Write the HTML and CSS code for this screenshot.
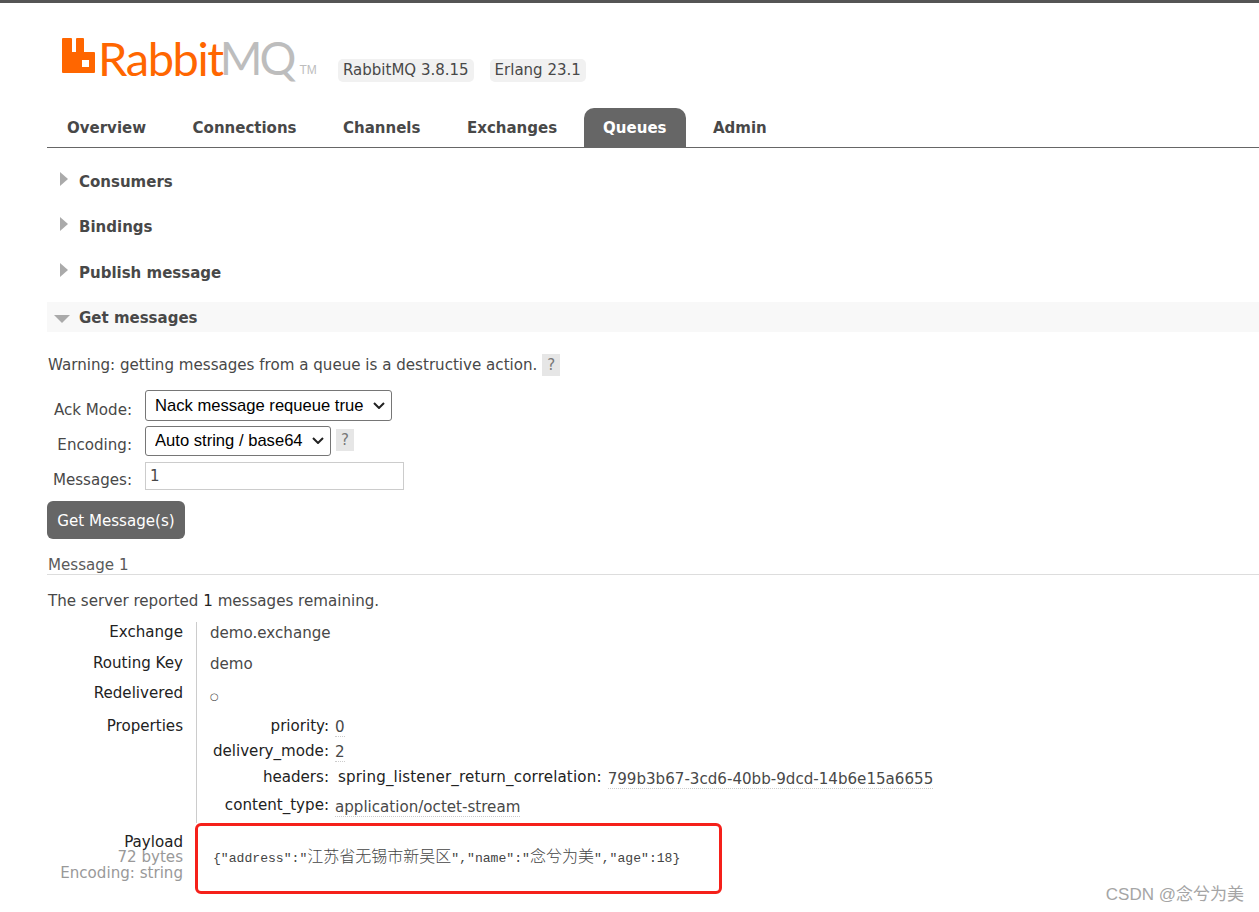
FILE: index.html
```html
<!DOCTYPE html>
<html lang="en">
<head>
<meta charset="utf-8">
<title>RabbitMQ Management</title>
<link rel="stylesheet" href="styles.css">
</head>
<body>
<header class="header">
  <div class="logo">
    <svg class="logo-mark" width="33" height="35" viewBox="0 0 33 35"><path fill="#ff6600" fill-rule="evenodd" d="M0 1a1 1 0 0 1 1-1h8a1 1 0 0 1 1 1v13h4V1a1 1 0 0 1 1-1h6a1 1 0 0 1 1 1v13h10a1 1 0 0 1 1 1v19a1 1 0 0 1-1 1H1a1 1 0 0 1-1-1zM20 22v7h7v-7z"/></svg>
    <span class="word-rabbit">Rabbit</span><span class="word-mq">MQ</span><span class="word-tm">TM</span>
  </div>
  <span class="badge badge-first">RabbitMQ 3.8.15</span>
  <span class="badge">Erlang 23.1</span>
</header>
<nav class="tabs">
  <a class="tab">Overview</a>
  <a class="tab">Connections</a>
  <a class="tab">Channels</a>
  <a class="tab">Exchanges</a>
  <a class="tab tab-active">Queues</a>
  <a class="tab">Admin</a>
</nav>
<main class="main">
  <h2 class="section"><span class="tri-right"></span>Consumers</h2>
  <h2 class="section"><span class="tri-right"></span>Bindings</h2>
  <h2 class="section section-low"><span class="tri-right"></span>Publish message</h2>
  <h2 class="section section-low section-open"><span class="tri-down"></span>Get messages</h2>
  <p class="warning">Warning: getting messages from a queue is a destructive action.<span class="help help-warning">?</span></p>
  <form class="form">
    <div class="form-row row-ack"><label class="form-label">Ack Mode:</label>
      <select class="select select-ack"><option>Nack message requeue true</option></select></div>
    <div class="form-row row-enc"><label class="form-label">Encoding:</label>
      <select class="select select-enc"><option>Auto string / base64</option></select><span class="help">?</span></div>
    <div class="form-row row-msg"><label class="form-label">Messages:</label>
      <input class="input" type="text" value="1"></div>
    <button class="button" type="button">Get Message(s)</button>
  </form>
  <h3 class="msg-title">Message 1</h3>
  <p class="server">The server reported <b class="count">1</b> messages remaining.</p>
  <div class="details">
    <div class="d-label l-exchange">Exchange</div><div class="d-value v-exchange">demo.exchange</div>
    <div class="d-label l-routing">Routing Key</div><div class="d-value v-routing">demo</div>
    <div class="d-label l-redel">Redelivered</div><div class="d-value v-redel">○</div>
    <div class="d-label l-props">Properties</div>
    <div class="d-value props">
      <div class="p-label">priority:</div><div class="p-value"><span class="dotted">0</span></div>
      <div class="p-label">delivery_mode:</div><div class="p-value"><span class="dotted">2</span></div>
      <div class="p-label">headers:</div><div class="p-value p-low"><span class="p-key">spring_listener_return_correlation:</span><span class="dotted">799b3b67-3cd6-40bb-9dcd-14b6e15a6655</span></div>
      <div class="p-label">content_type:</div><div class="p-value p-low"><span class="dotted">application/octet-stream</span></div>
    </div>
  </div>
  <div class="payload">
    <div class="pay-label"><div class="pay-title">Payload</div><div class="pay-sub">72 bytes</div><div class="pay-sub">Encoding: string</div></div>
    <div class="pay-box"><code class="pay-code">{"address":"<span class="cjk">江苏省无锡市新吴区</span>","name":"<span class="cjk">念兮为美</span>","age":18}</code></div>
  </div>
</main>
<div class="watermark">CSDN @念兮为美</div>
</body>
</html>
```
FILE: styles.css
```css
html, body { margin: 0; padding: 0; }
body {
  width: 1259px;
  height: 912px;
  overflow: hidden;
  position: relative;
  background: #fff;
  border-top: 3px solid #555;
  box-sizing: border-box;
  font-family: "DejaVu Sans", Verdana, sans-serif;
  font-size: 15.1px;
  color: #484848;
}
.header { display: flex; align-items: flex-start; height: 105px; padding-left: 62px; box-sizing: border-box; }
.logo { display: flex; align-items: flex-start; margin-top: 35px; height: 40px; width: 276px; flex: none; }
.logo-mark { flex: none; margin-right: 3px; }
.word-rabbit, .word-mq {
  font-family: Lato, "Liberation Sans", sans-serif;
  font-weight: 400;
  font-size: 47px;
  line-height: 40px;
}
.word-rabbit { color: #ff6600; letter-spacing: -1.4px; }
.word-mq { color: #bdbdbd; font-size: 46px; letter-spacing: -3px; margin-left: -3px; }
.word-tm { color: #bdbdbd; font-family: "Liberation Sans", sans-serif; font-size: 12px; line-height: 12px; margin: 26px 0 0 6px; }
.badge { margin-top: 56px; padding: 2px 5px; height: 19px; line-height: 19px; background: #f1f1f1; border-radius: 5px; font-size: 15px; color: #484848; }
.badge-first { margin-right: 16px; }
.tabs { display: flex; margin-left: 47px; height: 40px; border-bottom: 1px solid #666; box-sizing: border-box; }
.tab { height: 39px; line-height: 40px; padding: 0 20px; font-weight: 700; font-size: 15px; color: #484848; margin-right: 6.5px; }
.tab-active { background: #666; color: #fff; border-radius: 10px 10px 0 0; padding: 0 19.5px; margin-right: 7px; }
.main { padding-left: 47px; }
.section { display: flex; align-items: center; margin: 0; height: 30px; box-sizing: border-box; padding-top: 1px; font-size: 15px; font-weight: 700; color: #484848; position: relative; padding-left: 32px; margin-bottom: 15.33px; }
.section:first-of-type { margin-top: 18px; }
.section-low { padding-top: 3px; }
.section-open { background: #f8f8f8; }
.tri-right { position: absolute; left: 13px; top: 6px; border-left: 8px solid #aaa; border-top: 7.5px solid transparent; border-bottom: 7.5px solid transparent; }
.tri-down { position: absolute; left: 7px; top: 13px; border-top: 8px solid #aaa; border-left: 8px solid transparent; border-right: 8px solid transparent; }
.warning { margin: 21px 0 0; height: 24px; line-height: 24px; white-space: nowrap; display: flex; align-items: center; padding-left: 1px; }
.help { display: inline-block; width: 18px; height: 22px; line-height: 22px; background: #e6e6e6; color: #777; text-align: center; font-size: 15px; margin-left: 5px; }
.form { margin-top: 13px; }
.form-row { display: flex; align-items: flex-start; }
.form-label { width: 85px; text-align: right; color: #484848; flex: none; margin-right: 13px; }
.row-ack { height: 36px; }
.row-ack .form-label { padding-top: 11px; }
.row-enc { height: 36px; }
.row-enc .form-label { padding-top: 10px; }
.row-msg { height: 39px; }
.row-msg .form-label { padding-top: 9px; }
.select {
  appearance: none;
  font-family: "Liberation Sans", Arial, sans-serif;
  font-size: 16.6px;
  color: #000;
  background: #fff url("data:image/svg+xml,%3Csvg xmlns='http://www.w3.org/2000/svg' width='12' height='7' viewBox='0 0 12 7'%3E%3Cpath d='M1 1l5 5 5-5' fill='none' stroke='%23222' stroke-width='2'/%3E%3C/svg%3E") no-repeat right 6px center;
  border: 1px solid #767676;
  border-radius: 3px;
  height: 31px;
  padding: 0 2px 0 9px;
  box-sizing: border-box;
}
.select-ack { width: 247px; }
.select-enc { width: 186px; height: 30px; }
.row-enc .help { margin-top: 3px; }
.input { width: 259px; height: 28px; box-sizing: border-box; border: 1px solid #ccc; padding: 1px 0 0 4px; font-family: "DejaVu Sans", sans-serif; font-size: 15px; color: #484848; }
.button { display: block; width: 138px; height: 38px; background: #666; color: #fff; border: 0; border-radius: 6px; font-family: "DejaVu Sans", sans-serif; font-size: 15.1px; padding: 2px 0 0; }
.msg-title { margin: 16px 0 0; height: 19px; line-height: 20px; font-size: 15.1px; font-weight: 400; border-bottom: 1px solid #ddd; padding-left: 1px; color: #5a5a5a; }
.server { margin: 16px 0 0; height: 20px; line-height: 20px; padding-left: 1px; }
.count { font-weight: 400; color: #222; }
.details { display: grid; grid-template-columns: 136px 1fr; grid-template-rows: 31px 30px 33px auto; margin-top: 11px; }
.d-label { color: #222; text-align: right; line-height: 20px; }
.d-value { border-left: 1px solid #ccc; margin-left: 13px; padding-left: 13px; line-height: 20px; padding-top: 1px; }
.v-redel { font-size: 10px; padding-top: 4px; }
.d-value.props { display: grid; grid-template-columns: 119px 1fr; grid-template-rows: 25px 26px 28px 28px; padding-top: 0; }
.p-label { color: #222; text-align: right; line-height: 20px; }
.p-value { padding-left: 6px; line-height: 20px; padding-top: 1px; }
.p-low { padding-top: 2px; }
.p-key { color: #222; margin-right: 6px; margin-left: 3px; letter-spacing: 0.15px; position: relative; top: -2px; }
.dotted { border-bottom: 1px dotted #ccc; }
.payload { display: flex; }
.pay-label { width: 136px; text-align: right; padding-top: 12px; flex: none; line-height: 15.5px; }
.pay-title { color: #222; }
.pay-sub { color: #999; }
.pay-box { margin-left: 12px; width: 527px; height: 71px; box-sizing: border-box; border: 3px solid #f5201a; border-radius: 6px; display: flex; align-items: center; padding: 0 0 6px 15px; }
.pay-code { font-family: "Liberation Mono", monospace; font-size: 13.1px; color: #444; white-space: nowrap; }
.cjk { font-family: "Noto Sans CJK SC", sans-serif; font-size: 16px; font-weight: 300; }
.watermark { position: absolute; right: 15px; top: 877px; font-family: "Liberation Sans", "Noto Sans CJK SC", sans-serif; font-size: 17px; color: #a5a5a5; white-space: nowrap; }
```
